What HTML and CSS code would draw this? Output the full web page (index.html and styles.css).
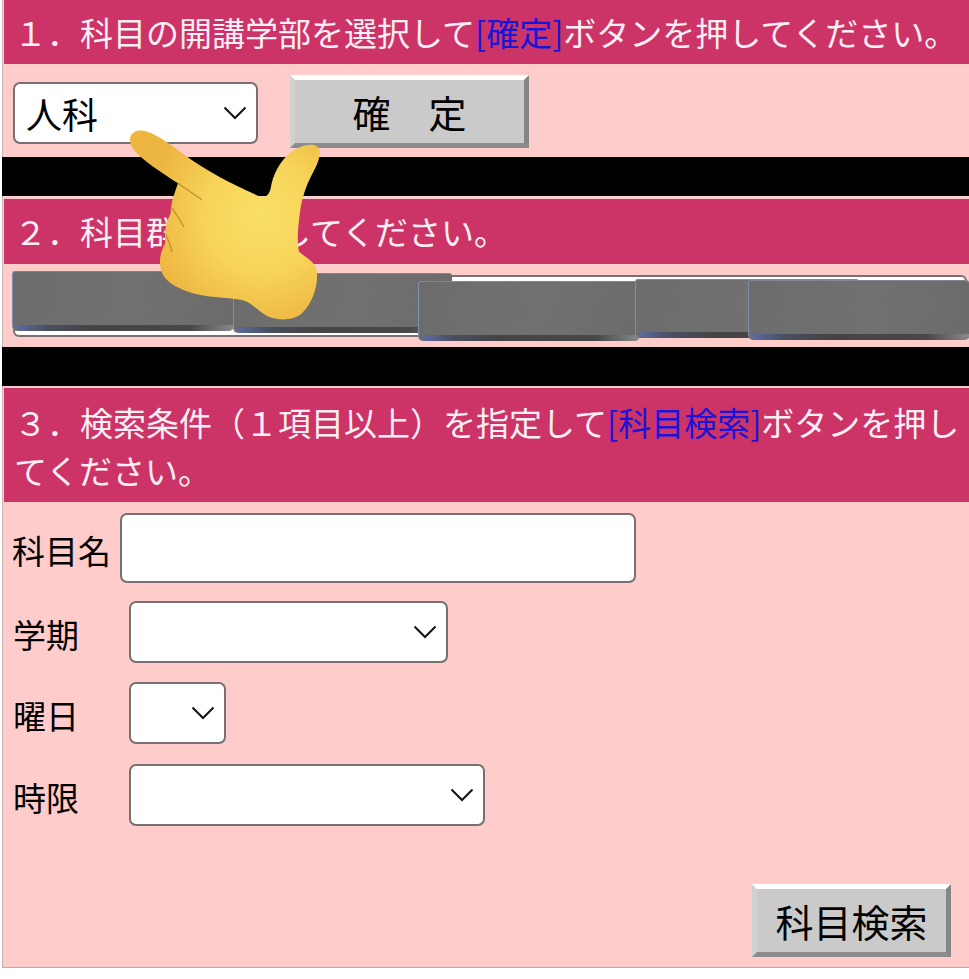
FILE: index.html
```html
<!DOCTYPE html>
<html lang="ja">
<head>
<meta charset="utf-8">
<title>科目検索</title>
<link rel="stylesheet" href="styles.css">
</head>
<body>
<main class="page">
  <section class="step step-one">
    <h2 class="step-title">１．科目の開講学部を選択して<span class="key">[確定]</span>ボタンを押してください。</h2>
    <div class="faculty-row">
      <span class="select select-faculty">
        <select><option>人科</option></select>
        <svg class="chev" viewBox="0 0 24 14"><path d="M1.5 1.5 12 12 22.5 1.5"/></svg>
      </span>
      <button class="bevel bevel-confirm" type="button">確　定</button>
    </div>
  </section>
  <div class="band"></div>
  <section class="step step-two">
    <h2 class="step-title">２．科目群を選択してください。</h2>
    <div class="group-box">
      <span class="tab tab-a"></span>
      <span class="tab tab-b"></span>
      <span class="tab tab-c"></span>
      <span class="tab tab-d"></span>
      <span class="tab tab-e"></span>
    </div>
  </section>
  <div class="band"></div>
  <section class="step step-three">
    <h2 class="step-title step-title-wrap">３．検索条件（１項目以上）を指定して<span class="key">[科目検索]</span>ボタンを押してください。</h2>
    <div class="name-row">
      <label class="name-label">科目名</label>
      <input class="name-input" type="text">
    </div>
    <div class="field field-term">
      <label class="field-label">学期</label>
      <span class="select select-term">
        <select><option></option></select>
        <svg class="chev" viewBox="0 0 24 14"><path d="M1.5 1.5 12 12 22.5 1.5"/></svg>
      </span>
    </div>
    <div class="field">
      <label class="field-label">曜日</label>
      <span class="select select-day">
        <select><option></option></select>
        <svg class="chev" viewBox="0 0 24 14"><path d="M1.5 1.5 12 12 22.5 1.5"/></svg>
      </span>
    </div>
    <div class="field field-period">
      <label class="field-label">時限</label>
      <span class="select select-period">
        <select><option></option></select>
        <svg class="chev" viewBox="0 0 24 14"><path d="M1.5 1.5 12 12 22.5 1.5"/></svg>
      </span>
    </div>
    <div class="search-row">
      <button class="bevel bevel-search" type="button">科目検索</button>
    </div>
  </section>
  <svg class="hand" viewBox="0 0 630 630" aria-hidden="true">
    <defs>
      <radialGradient id="skin" gradientUnits="userSpaceOnUse" cx="420" cy="290" r="340">
        <stop offset="0" stop-color="#f9df66"/>
        <stop offset=".5" stop-color="#f7d459"/>
        <stop offset="1" stop-color="#edb641"/>
      </radialGradient>
    </defs>
    <path fill="url(#skin)" d="M24 55C28 34 50 28 72 34C112 46 150 78 195 110C255 152 335 196 415 230C430 233 442 226 446 205C452 165 472 125 505 98C532 78 568 66 586 80C600 92 592 120 578 148C560 182 545 215 536 262C530 305 524 350 530 392C545 412 578 420 584 452C590 494 572 548 540 580C515 602 470 604 435 588C405 572 395 550 360 540C310 530 250 535 190 512C150 496 118 478 114 432C112 405 122 385 130 368C126 340 130 310 146 280C146 255 155 225 168 190C130 165 82 135 50 105C34 90 22 75 24 55Z"/>
    <g class="hand-lines">
      <path d="M168 190C190 205 215 222 238 238"/>
      <path d="M150 265C162 282 175 300 185 320"/>
      <path d="M132 345C140 362 146 380 150 395"/>
    </g>
  </svg>
</main>
</body>
</html>
```
FILE: styles.css
```css
* { box-sizing: border-box; }
html, body { margin: 0; padding: 0; background: #fff; }
body {
  font-family: "Noto Sans CJK JP", "Noto Sans", sans-serif;
  font-weight: 400;
  color: #000;
}
.page {
  position: relative;
  width: 967px;
  height: 968px;
  margin-left: 2px;
  background: #ffcccc;
  border-left: 1px solid #c8b4b4;
  border-bottom: 1px solid #c0a8a8;
}
.step-title {
  margin: 0 0 0 1px;
  padding: 0 0 0 10px;
  background: #cc3366;
  color: #ffeef3;
  font-size: 33px;
  font-weight: 400;
  line-height: 48px;
  white-space: nowrap;
}
.key { color: #1a14d8; }
.step-one { height: 157px; }
.step-one .step-title { height: 64px; padding-top: 8px; }
.faculty-row {
  display: flex;
  align-items: flex-start;
  gap: 32px;
  padding: 11px 0 0 10px;
}
.select {
  position: relative;
  display: block;
  height: 62px;
}
.select select {
  appearance: none;
  -webkit-appearance: none;
  display: block;
  width: 100%;
  height: 100%;
  padding: 0 0 0 11px;
  background: #fff;
  border: 2px solid #767070;
  border-radius: 7px;
  font: inherit;
  font-size: 36px;
  color: #000;
}
.chev {
  position: absolute;
  top: 24px;
  right: 11px;
  width: 24px;
  height: 14px;
  fill: none;
  stroke: #111;
  stroke-width: 2;
  pointer-events: none;
}
.select-faculty { width: 245px; margin-top: 7px; }
.bevel {
  display: block;
  padding: 0;
  background: #cacaca;
  border-style: solid;
  border-width: 5px;
  border-color: #fff #858585 #8c8c8c #d2d2d2;
  border-radius: 0;
  font: inherit;
  font-size: 38px;
  line-height: 1;
  color: #000;
}
.bevel-confirm { width: 239px; height: 73px; }
.bevel-search { width: 199px; height: 73px; }
.band { height: 39px; background: #000; margin-left: -1px; }
.step-two { height: 151px; padding-top: 3px; }
.step-two .step-title { height: 65px; padding-top: 8px; }
.group-box {
  position: relative;
  height: 62px;
  margin: 11px 2px 0 10px;
  background: #fff;
  border: 2px solid #767070;
  border-radius: 6px;
}
.tab {
  position: absolute;
  width: 221px;
  height: 59px;
  background: linear-gradient(100deg, #6c6c6c, #717171 55%, #6b6b6b);
  border-top: 1px solid #808690;
  border-left: 1px solid #7f8db4;
  border-radius: 3px 3px 5px 5px;
}
.tab::after {
  content: "";
  position: absolute;
  left: 3px;
  right: -1px;
  bottom: 0;
  height: 6px;
  background: linear-gradient(90deg, #5d6c9e, #4a4f62 14%, #444 35%, #484848 80%, #8b8b8b);
  border-radius: 0 0 5px 5px;
}
.tab-a { left: -3px; top: -6px; height: 60px; }
.tab-b { left: 218px; top: -4px; width: 219px; height: 60px; }
.tab-c { left: 403px; top: 4px; height: 60px; }
.tab-d { left: 620px; top: 2px; width: 224px; height: 59px; }
.tab-e { left: 733px; top: 3px; width: 221px; height: 60px; }
.step-three { padding-top: 2px; }
.step-title-wrap {
  height: 114px;
  padding: 10px 0 0 10px;
  white-space: normal;
}
.name-row {
  display: flex;
  align-items: center;
  gap: 9px;
  padding: 11px 0 0 9px;
}
.name-label { font-size: 33px; line-height: 48px; padding-top: 3px; }
.name-input {
  width: 516px;
  height: 70px;
  background: #fff;
  border: 2px solid #767070;
  border-radius: 7px;
}
.field {
  display: flex;
  align-items: center;
  height: 62px;
  margin-top: 19px;
  padding-left: 10px;
}
.field-term { margin-top: 18px; }
.field-period { margin-top: 20px; }
.field-label {
  width: 116px;
  font-size: 33px;
  line-height: 48px;
  padding-top: 3px;
}
.select-term { width: 319px; }
.select-day { width: 97px; }
.select-period { width: 356px; }
.search-row {
  display: flex;
  justify-content: flex-end;
  padding: 58px 18px 0 0;
}
.hand {
  position: absolute;
  left: 119px;
  top: 120px;
  width: 210px;
  height: 210px;
}
.hand-lines path {
  fill: none;
  stroke: #a97a24;
  stroke-width: 3.5;
  stroke-linecap: round;
  opacity: .75;
}
```
